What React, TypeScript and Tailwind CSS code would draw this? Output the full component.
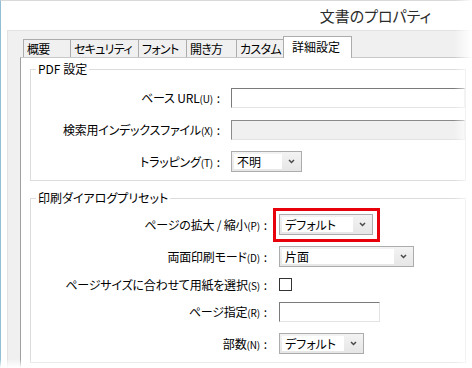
import React from "react";

const font = "[font-family:'Noto_Sans_CJK_JP','Noto_Sans',sans-serif] [font-feature-settings:'palt']";

interface ISelectProps {
  value: string;
  className: string;
}

const Chevron = () => (
  <svg width="7" height="5" viewBox="0 0 7 5">
    <path d="M1 1l2.5 2.5L6 1" fill="none" stroke="#4a4a4a" strokeWidth="1.5" />
  </svg>
);

const Select = (props: ISelectProps) => {
  const { value, className } = props;
  return (
    <div
      className={`flex h-[21px] items-center border border-[#acacac] bg-gradient-to-b from-[#f3f3f3] to-[#e6e6e6] ${className}`}
    >
      <div className="ml-[2px] flex h-[15px] flex-1 items-center bg-white pl-[3px] text-[12px] leading-none text-black">
        {value}
      </div>
      <div className="flex w-[19px] shrink-0 justify-center">
        <Chevron />
      </div>
    </div>
  );
};

interface ILabelProps {
  text: string;
  hotkey: string;
  className: string;
}

const Label = (props: ILabelProps) => {
  const { text, hotkey, className } = props;
  return (
    <div className={`shrink-0 whitespace-nowrap text-right text-[12px] leading-none text-black tracking-[-0.2px] ${className}`}>
      {text}
      <span className="text-[10px]">({hotkey})</span>
      <span className="ml-[4px]">:</span>
    </div>
  );
};

const tabs = [
  { name: "概要", w: "w-[48px]" },
  { name: "セキュリティ", w: "w-[69px]" },
  { name: "フォント", w: "w-[49px]" },
  { name: "開き方", w: "w-[51px]" },
  { name: "カスタム", w: "w-[49px]" },
];

export default function App() {
  return (
    <div className={`relative h-[368px] w-[472px] overflow-hidden bg-white ${font}`}>
      <div className="flex h-full flex-col border-l border-t border-l-[#93bfd5] border-t-[#d9d9d9]">
        {/* title bar */}
        <div className="flex h-[29px] shrink-0 items-center justify-end pr-[41px] pt-[1px] text-[15px] text-[#2b2b2b]">
          文書のプロパティ
        </div>

        {/* dialog body */}
        <div className="ml-[6px] flex flex-1 flex-col border-l border-t border-[#e2e2e2] bg-[#f0f0f0]">
          {/* tabs */}
          <div className="relative z-10 flex h-[26px] shrink-0 items-end pl-[15px]">
            {tabs.map((t, i) => (
              <div
                key={t.name}
                className={`flex h-[18px] items-center overflow-hidden whitespace-nowrap border-l border-r border-t border-[#acacac] pl-[3px] text-[12px] leading-none tracking-[-0.7px] text-black ${t.w} ${i > 0 ? "-ml-px" : ""}`}
              >
                {t.name}
              </div>
            ))}
            <div className="-mb-px -ml-[2px] flex h-[22px] w-[69px] items-center whitespace-nowrap border-l border-r border-t border-[#acacac] bg-white pb-[1px] pl-[8px] text-[12px] leading-none text-black">
              詳細設定
            </div>
          </div>

          {/* panel */}
          <div className="ml-[12px] flex flex-1 flex-col border-l border-t border-l-[#a0a0a0] border-t-[#c8c8c8] bg-white pl-[9px] pr-[6px] pt-[3px]">
            <fieldset className="border border-[#dcdcdc] px-0 pb-[8px] pt-[10px]">
              <legend className="ml-[5px] px-[2px] text-[12px] leading-[16px] text-black">PDF 設定</legend>
              <div className="flex flex-col gap-[11px]">
                <div className="flex h-[21px] items-center">
                  <Label text="ベース URL" hotkey="U" className="w-[193px] pr-[4px]" />
                  <div className="ml-[7px] h-[20px] flex-1 border border-b-[#e3e3e3] border-l-[#7a7a7a] border-r-[#e3e3e3] border-t-[#7a7a7a] bg-white" />
                </div>
                <div className="flex h-[21px] items-center">
                  <Label text="検索用インデックスファイル" hotkey="X" className="w-[193px] pr-[4px]" />
                  <div className="ml-[7px] h-[20px] flex-1 border border-b-[#e3e3e3] border-l-[#8a8a8a] border-r-[#e3e3e3] border-t-[#8a8a8a] bg-[#f0f0f0]" />
                </div>
                <div className="flex h-[21px] items-center">
                  <Label text="トラッピング" hotkey="T" className="w-[193px] pr-[4px]" />
                  <Select value="不明" className="ml-[7px] w-[71px]" />
                </div>
              </div>
            </fieldset>

            <fieldset className="mt-[9px] border border-[#dcdcdc] px-0 pb-[8px] pt-[8px]">
              <legend className="ml-[5px] px-[2px] text-[12px] leading-[16px] text-black">印刷ダイアログプリセット</legend>
              <div className="flex flex-col gap-[11px]">
                <div className="flex h-[21px] items-center">
                  <Label text="ページの拡大 / 縮小" hotkey="P" className="w-[239px] pr-[3px]" />
                  <div className="relative ml-[9px]">
                    <Select value="デフォルト" className="w-[94px]" />
                    <div className="absolute -bottom-[7px] -left-[6px] -right-[7px] -top-[6px] border-[3px] border-[#e8000b]" />
                  </div>
                </div>
                <div className="flex h-[21px] items-center">
                  <Label text="両面印刷モード" hotkey="D" className="w-[239px] pr-[3px]" />
                  <Select value="片面" className="ml-[9px] w-[135px]" />
                </div>
                <div className="flex h-[13px] items-center">
                  <Label text="ページサイズに合わせて用紙を選択" hotkey="S" className="w-[239px] pr-[3px]" />
                  <div className="ml-[9px] h-[13px] w-[13px] border border-[#333333] bg-white" />
                </div>
                <div className="flex h-[20px] items-center">
                  <Label text="ページ指定" hotkey="R" className="w-[239px] pr-[3px]" />
                  <div className="ml-[9px] h-[20px] w-[101px] border border-b-[#e3e3e3] border-l-[#7a7a7a] border-r-[#e3e3e3] border-t-[#7a7a7a] bg-white" />
                </div>
                <div className="flex h-[21px] items-center">
                  <Label text="部数" hotkey="N" className="w-[239px] pr-[3px]" />
                  <Select value="デフォルト" className="ml-[9px] w-[85px]" />
                </div>
              </div>
            </fieldset>
          </div>
        </div>
      </div>

      {/* soft edges of the captured window */}
      <div className="absolute right-0 top-0 h-full w-[18px] bg-gradient-to-r from-white/0 to-white" />
      <div className="absolute bottom-0 left-0 h-[9px] w-full bg-gradient-to-b from-white/0 to-white" />
    </div>
  );
}
